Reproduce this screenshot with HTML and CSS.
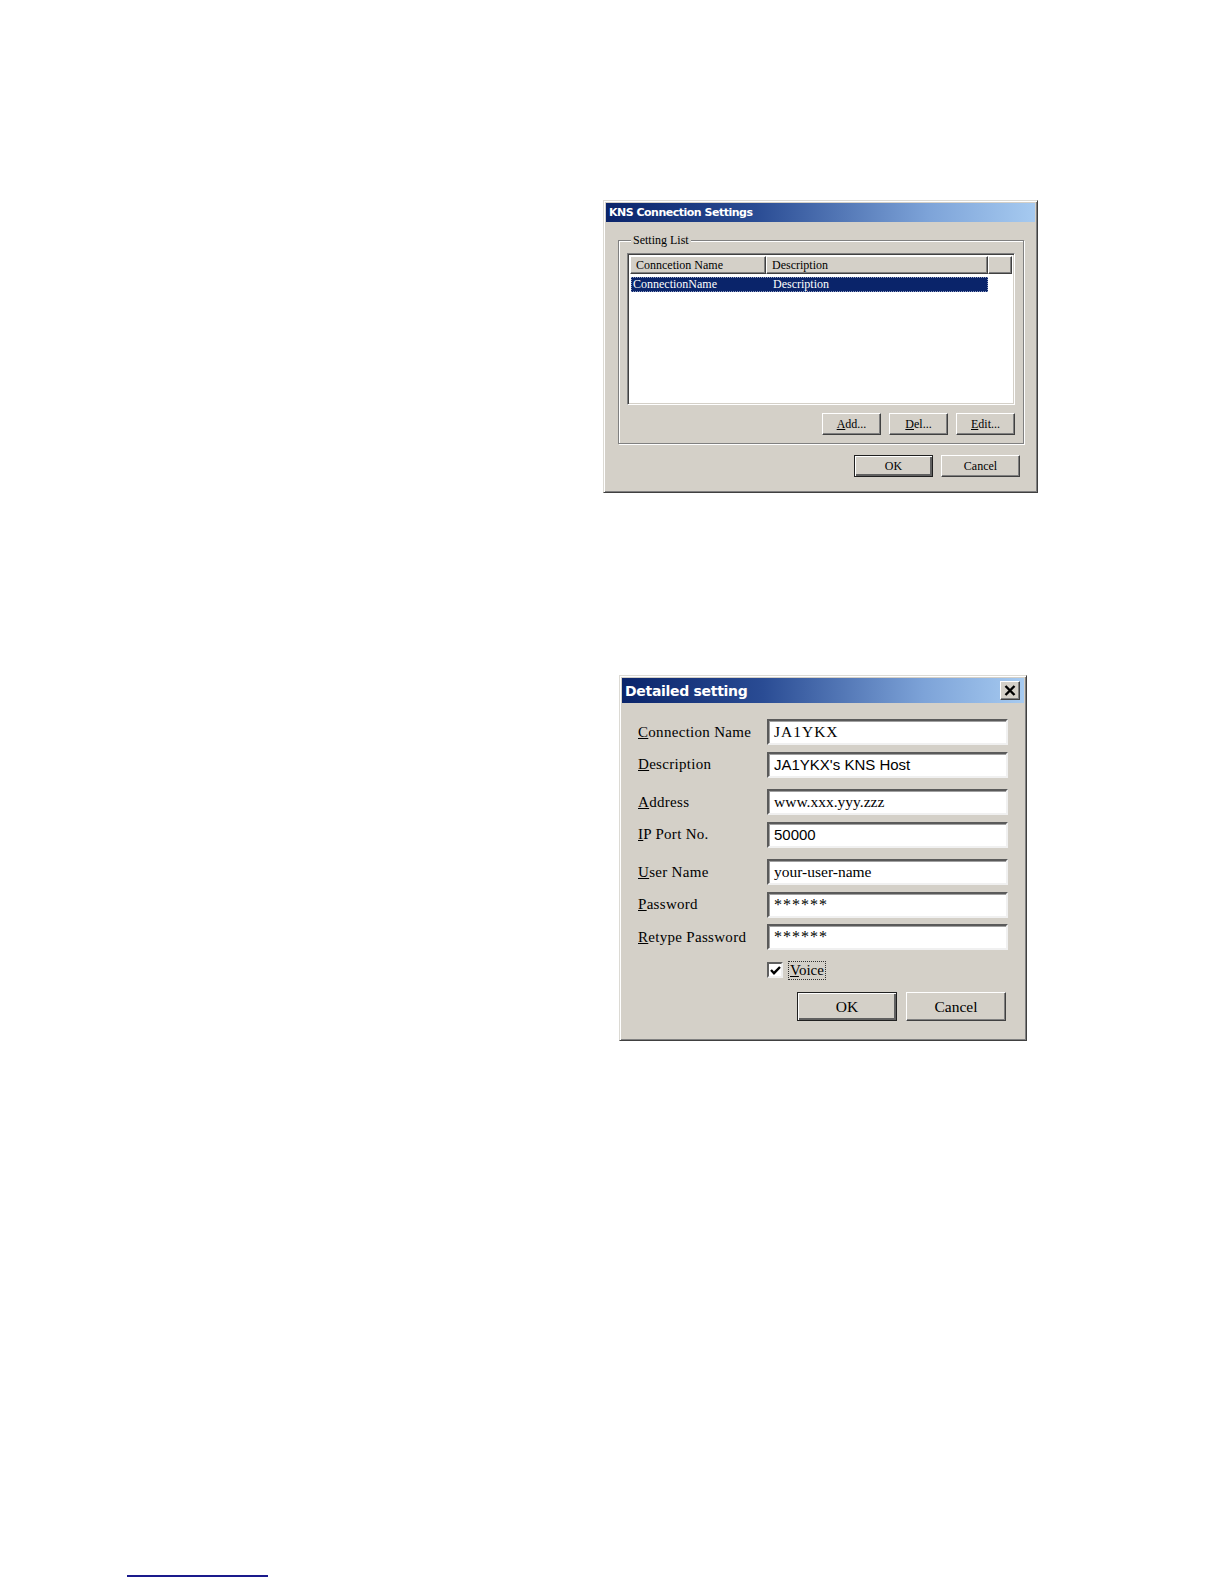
FILE: index.html
```html
<!DOCTYPE html>
<html>
<head>
<meta charset="utf-8">
<title>KNS Connection Settings</title>
<link rel="stylesheet" href="styles.css">
</head>
<body>
<div class="page">
  <section class="dialog dlg-list">
    <div class="titlebar"><span class="title small">KNS Connection Settings</span></div>
    <div class="dlg-body">
      <fieldset class="group">
        <legend>Setting List</legend>
        <div class="listview">
          <div class="lv-header">
            <div class="lv-col c1">Conncetion Name</div>
            <div class="lv-col c2">Description</div>
            <div class="lv-col c3"></div>
          </div>
          <div class="lv-row selected">
            <span class="c1">ConnectionName</span>
            <span class="c2">Description</span>
          </div>
        </div>
        <div class="btn-row inner">
          <button class="btn sm"><u>A</u>dd...</button>
          <button class="btn sm"><u>D</u>el...</button>
          <button class="btn sm"><u>E</u>dit...</button>
        </div>
      </fieldset>
      <div class="btn-row outer">
        <button class="btn md default">OK</button>
        <button class="btn md">Cancel</button>
      </div>
    </div>
  </section>

  <section class="dialog dlg-detail">
    <div class="titlebar big">
      <span class="title large">Detailed setting</span>
      <span class="close-btn"><svg width="12" height="11" viewBox="0 0 12 11"><path d="M1.5 1 L10.5 10 M10.5 1 L1.5 10" stroke="#000" stroke-width="2.4" fill="none"/></svg></span>
    </div>
    <div class="form">
      <div class="frow"><label><u>C</u>onnection Name</label><div class="field slab">JA1YKX</div></div>
      <div class="frow"><label><u>D</u>escription</label><div class="field sans">JA1YKX's KNS Host</div></div>
      <div class="frow gap"><label><u>A</u>ddress</label><div class="field">www.xxx.yyy.zzz</div></div>
      <div class="frow"><label><u>I</u>P Port No.</label><div class="field sans">50000</div></div>
      <div class="frow gap"><label><u>U</u>ser Name</label><div class="field">your-user-name</div></div>
      <div class="frow"><label><u>P</u>assword</label><div class="field stars">******</div></div>
      <div class="frow"><label><u>R</u>etype Password</label><div class="field stars">******</div></div>
      <div class="frow check"><span></span><div class="checkline"><span class="checkbox"><svg width="11" height="9" viewBox="0 0 11 9"><path d="M1 4 L4 7.2 L10 1" stroke="#000" stroke-width="2.4" fill="none"/></svg></span><span class="focus"><u>V</u>oice</span></div></div>
      <div class="btn-row detail">
        <button class="btn lg default">OK</button>
        <button class="btn lg">Cancel</button>
      </div>
    </div>
  </section>

  <div class="footline"></div>
</div>
</body>
</html>
```

FILE: styles.css
```css
html, body {
  margin: 0;
  padding: 0;
  background: #ffffff;
  overflow: hidden;
}

.page {
  display: flex;
  flex-direction: column;
  align-items: flex-start;
  font-family: "Liberation Serif", "Times New Roman", serif;
  color: #000;
}

.dialog {
  background: #d4d0c8;
  border: 1px solid;
  border-color: #dcdad4 #404040 #404040 #dcdad4;
  box-shadow: inset 1px 1px 0 #ffffff, inset -1px -1px 0 #808080;
  padding: 2px;
  box-sizing: border-box;
}

.dlg-list {
  margin-top: 200px;
  margin-left: 603px;
  width: 435px;
  height: 293px;
}

.dlg-detail {
  margin-top: 182px;
  margin-left: 619px;
  width: 408px;
  height: 366px;
}

.titlebar {
  height: 19px;
  background: linear-gradient(to right, #0a246a 0%, #2a4c94 35%, #7da3d8 75%, #a6caf0 100%);
  display: flex;
  align-items: center;
  padding-left: 3px;
}

.titlebar.big {
  height: 25px;
  justify-content: space-between;
  padding-right: 4px;
}

.title {
  color: #ffffff;
  font-family: "DejaVu Sans", Verdana, sans-serif;
  font-weight: bold;
  white-space: nowrap;
}

.title.small {
  font-size: 11px;
  letter-spacing: -0.5px;
}

.title.large {
  font-size: 14px;
  letter-spacing: -0.3px;
}

.close-btn {
  width: 20px;
  height: 19px;
  box-sizing: border-box;
  background: #d4d0c8;
  border: 1px solid;
  border-color: #ffffff #404040 #404040 #ffffff;
  box-shadow: inset -1px -1px 0 #808080;
  display: flex;
  align-items: center;
  justify-content: center;
}

.dlg-body {
  padding: 12px 13px 0 12px;
  display: flex;
  flex-direction: column;
}

.group {
  margin: 0;
  padding: 0 8px 8px 8px;
  border: 1px solid #808080;
  box-shadow: inset 1px 1px 0 #ffffff, 1px 1px 0 #ffffff;
  width: 406px;
  height: 210px;
  box-sizing: border-box;
  display: flex;
  flex-direction: column;
}

.group legend {
  font-size: 12px;
  padding: 0 2px;
  margin-left: 4px;
  background: #d4d0c8;
  line-height: 13px;
}

.listview {
  margin-top: 6px;
  height: 152px;
  background: #ffffff;
  border: 1px solid;
  border-color: #808080 #ffffff #ffffff #808080;
  box-shadow: inset 1px 1px 0 #404040, inset -1px -1px 0 #d4d0c8;
  box-sizing: border-box;
  padding: 2px;
  font-size: 12px;
}

.lv-header {
  display: flex;
  height: 18px;
}

.lv-col {
  background: #d4d0c8;
  border: 1px solid;
  border-color: #ffffff #404040 #404040 #ffffff;
  box-shadow: inset -1px -1px 0 #808080;
  box-sizing: border-box;
  padding-left: 5px;
  line-height: 16px;
  white-space: nowrap;
}

.lv-col.c1 { width: 136px; }
.lv-col.c2 { width: 222px; }
.lv-col.c3 { flex: 1; }

.lv-row.selected {
  margin-top: 3px;
  margin-left: 1px;
  width: 357px;
  height: 15px;
  background: #0a246a;
  color: #ffffff;
  outline: 1px dotted #8e9bc0;
  outline-offset: -1px;
  display: flex;
  line-height: 15px;
}

.lv-row .c1 { width: 138px; padding-left: 2px; }
.lv-row .c2 { padding-left: 2px; }

.btn-row {
  display: flex;
  justify-content: flex-end;
  gap: 8px;
}

.btn-row.inner {
  margin-top: 8px;
}

.btn-row.outer {
  margin-top: 11px;
  margin-right: 2px;
}

.btn {
  font-family: "Liberation Serif", "Times New Roman", serif;
  background: #d4d0c8;
  border: 1px solid;
  border-color: #ffffff #404040 #404040 #ffffff;
  box-shadow: inset -1px -1px 0 #808080;
  padding: 0;
  margin: 0;
  color: #000;
  box-sizing: border-box;
}

.btn.default {
  border-color: #202020;
  box-shadow: inset 1px 1px 0 #ffffff, inset -2px -2px 0 #606060;
}

.btn.sm {
  width: 59px;
  height: 22px;
  font-size: 12px;
}

.btn.md {
  width: 79px;
  height: 22px;
  font-size: 12px;
}

.btn.lg {
  width: 100px;
  height: 29px;
  font-size: 15.5px;
}

.form {
  padding: 16px 17px 0 16px;
  display: flex;
  flex-direction: column;
  gap: 6.5px;
  font-size: 15px;
}

.frow {
  display: grid;
  grid-template-columns: 129px 241px;
  align-items: center;
}

.frow.gap {
  margin-top: 5px;
}

.frow label {
  white-space: nowrap;
  letter-spacing: 0.3px;
}

.field {
  height: 26px;
  box-sizing: border-box;
  background: #ffffff;
  border: 2px solid;
  border-color: #5a5a5a #f0f0f0 #f0f0f0 #5a5a5a;
  box-shadow: inset 1px 1px 0 #a0a0a0;
  padding: 0 5px;
  line-height: 22px;
  font-size: 15.5px;
  white-space: nowrap;
}

.field.slab {
  font-size: 15.5px;
  letter-spacing: 1px;
}

.field.sans {
  font-family: "Liberation Sans", Arial, sans-serif;
  font-size: 15px;
}

.field.stars {
  font-size: 16px;
  letter-spacing: 1px;
}

.frow.check {
  margin-top: 5px;
}

.checkline {
  display: flex;
  align-items: center;
  gap: 6px;
}

.checkbox {
  width: 16px;
  height: 16px;
  box-sizing: border-box;
  background: #ffffff;
  border: 2px solid;
  border-color: #606060 #f0f0f0 #f0f0f0 #606060;
  display: flex;
  align-items: center;
  justify-content: center;
}

.focus {
  outline: 1px dotted #303030;
  padding: 0 1px;
  line-height: 17px;
}

.btn-row.detail {
  margin-top: 7px;
  gap: 9px;
  margin-right: 1px;
}

.footline {
  margin-top: 534px;
  margin-left: 127px;
  width: 141px;
  height: 2px;
  background: #1a1a8c;
}
```
